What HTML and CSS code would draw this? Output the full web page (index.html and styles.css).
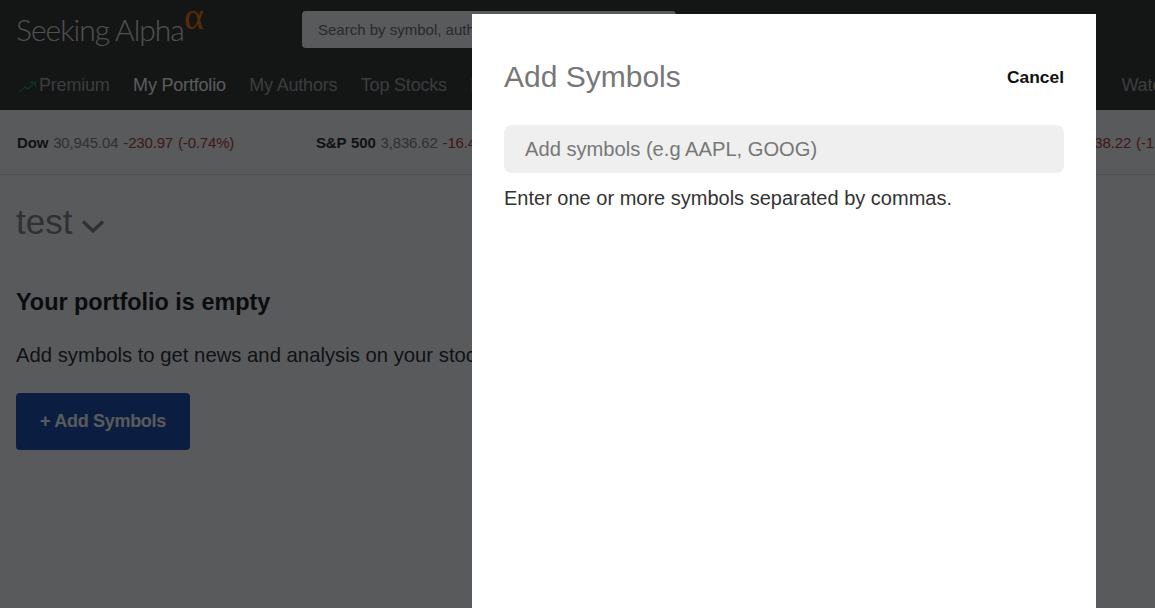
FILE: index.html
```html
<!DOCTYPE html>
<html lang="en">
<head>
<meta charset="utf-8">
<title>Seeking Alpha - Add Symbols</title>
<link rel="stylesheet" href="styles.css">
</head>
<body>
<div class="page">
  <header class="header">
    <div class="top">
      <div class="logo">Seeking Alpha<span class="alpha">α</span></div>
      <div class="search">Search by symbol, author or keyword</div>
    </div>
    <nav class="nav">
      <a class="nav-item premium"><svg class="trend" width="19" height="12" viewBox="0 0 19 12"><path d="M1 11 L7 6 L9.5 8 L17 2 M12.5 1.5 L17.5 1.5 L17.5 6" fill="none" stroke="#12a06a" stroke-width="1.3"/></svg>Premium</a>
      <a class="nav-item active">My Portfolio</a>
      <a class="nav-item">My Authors</a>
      <a class="nav-item">Top Stocks</a>
      <a class="nav-item">Earnings</a>
      <a class="nav-item watch">Watchlist</a>
    </nav>
  </header>
  <div class="ticker">
    <div class="tick"><b>Dow</b> 30,945.04 <span class="down">-230.97 (-0.74%)</span></div>
    <div class="tick"><b>S&amp;P 500</b> 3,836.62 <span class="down">-16.45 (-0.43%)</span></div>
    <div class="tick"><b>Nasdaq</b> 12,741.95 <span class="down">-138.22 (-1.07%)</span></div>
  </div>
  <main class="main">
    <h1 class="title">test <svg class="chev" width="24" height="16" viewBox="0 0 24 16"><path d="M2 3.5 L12 13 L22 3.5" fill="none" stroke="#888a8c" stroke-width="3.4"/></svg></h1>
    <h2 class="empty">Your portfolio is empty</h2>
    <p class="hint">Add symbols to get news and analysis on your stocks.</p>
    <button class="add-btn">+ Add Symbols</button>
  </main>
</div>
<div class="overlay"></div>
<section class="modal">
  <div class="modal-head">
    <h2 class="modal-title">Add Symbols</h2>
    <a class="cancel">Cancel</a>
  </div>
  <div class="modal-input">Add symbols (e.g AAPL, GOOG)</div>
  <p class="modal-hint">Enter one or more symbols separated by commas.</p>
</section>
</body>
</html>
```
FILE: styles.css
```css
* { box-sizing: border-box; }
html, body { margin: 0; height: 100%; overflow: hidden; }
body { font-family: "Liberation Sans", Arial, sans-serif; background: #fff; color: #333; }
.page { height: 608px; overflow: hidden; }
.header { background: #3a3936; height: 110px; }
.top { display: flex; align-items: flex-start; height: 62px; padding-left: 16px; }
.logo { font-family: "Lato", sans-serif; font-weight: 300; font-size: 30px; line-height: 36px; margin-top: 11px; color: #e2e2e2; letter-spacing: -1px; width: 286px; white-space: nowrap; position: relative; }
.alpha { font-family: "Liberation Serif", serif; font-size: 38px; line-height: 38px; letter-spacing: 0; color: #f47a10; position: absolute; left: 168px; top: -14px; }
.search { width: 374px; height: 37px; margin-top: 11px; background: #fff; border-radius: 4px; padding-left: 16px; font-size: 15px; line-height: 38px; color: #757575; white-space: nowrap; overflow: hidden; }
.nav { display: flex; gap: 23.5px; width: 1192px; padding-left: 18px; height: 48px; font-size: 18px; letter-spacing: -0.2px; color: #aaa; white-space: nowrap; }
.nav-item { display: flex; align-items: center; height: 46px; }
.watch { margin-left: auto; }
.trend { margin-right: 2px; margin-top: 3px; }
.active { color: #fff; }
.ticker { display: grid; grid-template-columns: 299px 637px auto; height: 65px; padding-left: 17px; border-bottom: 1px solid #ddd; font-size: 15px; letter-spacing: -0.17px; word-spacing: 1px; color: #888; background: #fff; line-height: 66px; white-space: nowrap; overflow: hidden; }
.tick b { color: #333; }
.down { color: #b8403c; }
.main { padding: 0 16px; }
.title { margin: 27px 0 0; font-weight: 400; font-size: 35px; line-height: 40px; color: #888a8c; display: flex; align-items: center; }
.chev { margin: 8px 0 0 9px; }
.empty { margin: 47px 0 0; font-size: 23.4px; line-height: 26px; font-weight: 700; color: #222; }
.hint { margin: 27px 0 0; font-size: 20.3px; line-height: 26px; color: #333; white-space: nowrap; }
.add-btn { display: block; margin-top: 25px; width: 174px; height: 57px; border: 0; border-radius: 4px; background: #2050b0; color: #fff; font: 700 18px "Liberation Sans", Arial, sans-serif; letter-spacing: -0.3px; padding: 0; }
.overlay { position: fixed; inset: 0; background: rgba(0,1,4,.65); }
.modal { position: fixed; left: 472px; top: 14px; width: 624px; height: 594px; background: #fff; padding: 32px; }
.modal-head { display: flex; justify-content: space-between; align-items: center; height: 62px; }
.modal-title { margin: 0; font-weight: 400; font-size: 30px; color: #777; }
.cancel { font-weight: 700; font-size: 17.4px; color: #111; }
.modal-input { height: 48px; margin-top: 17px; background: #efefef; border-radius: 8px; padding-left: 21px; line-height: 48px; font-size: 20.15px; color: #777; }
.modal-hint { margin: 12px 0 0; font-size: 20px; line-height: 26px; color: #333; }
```
